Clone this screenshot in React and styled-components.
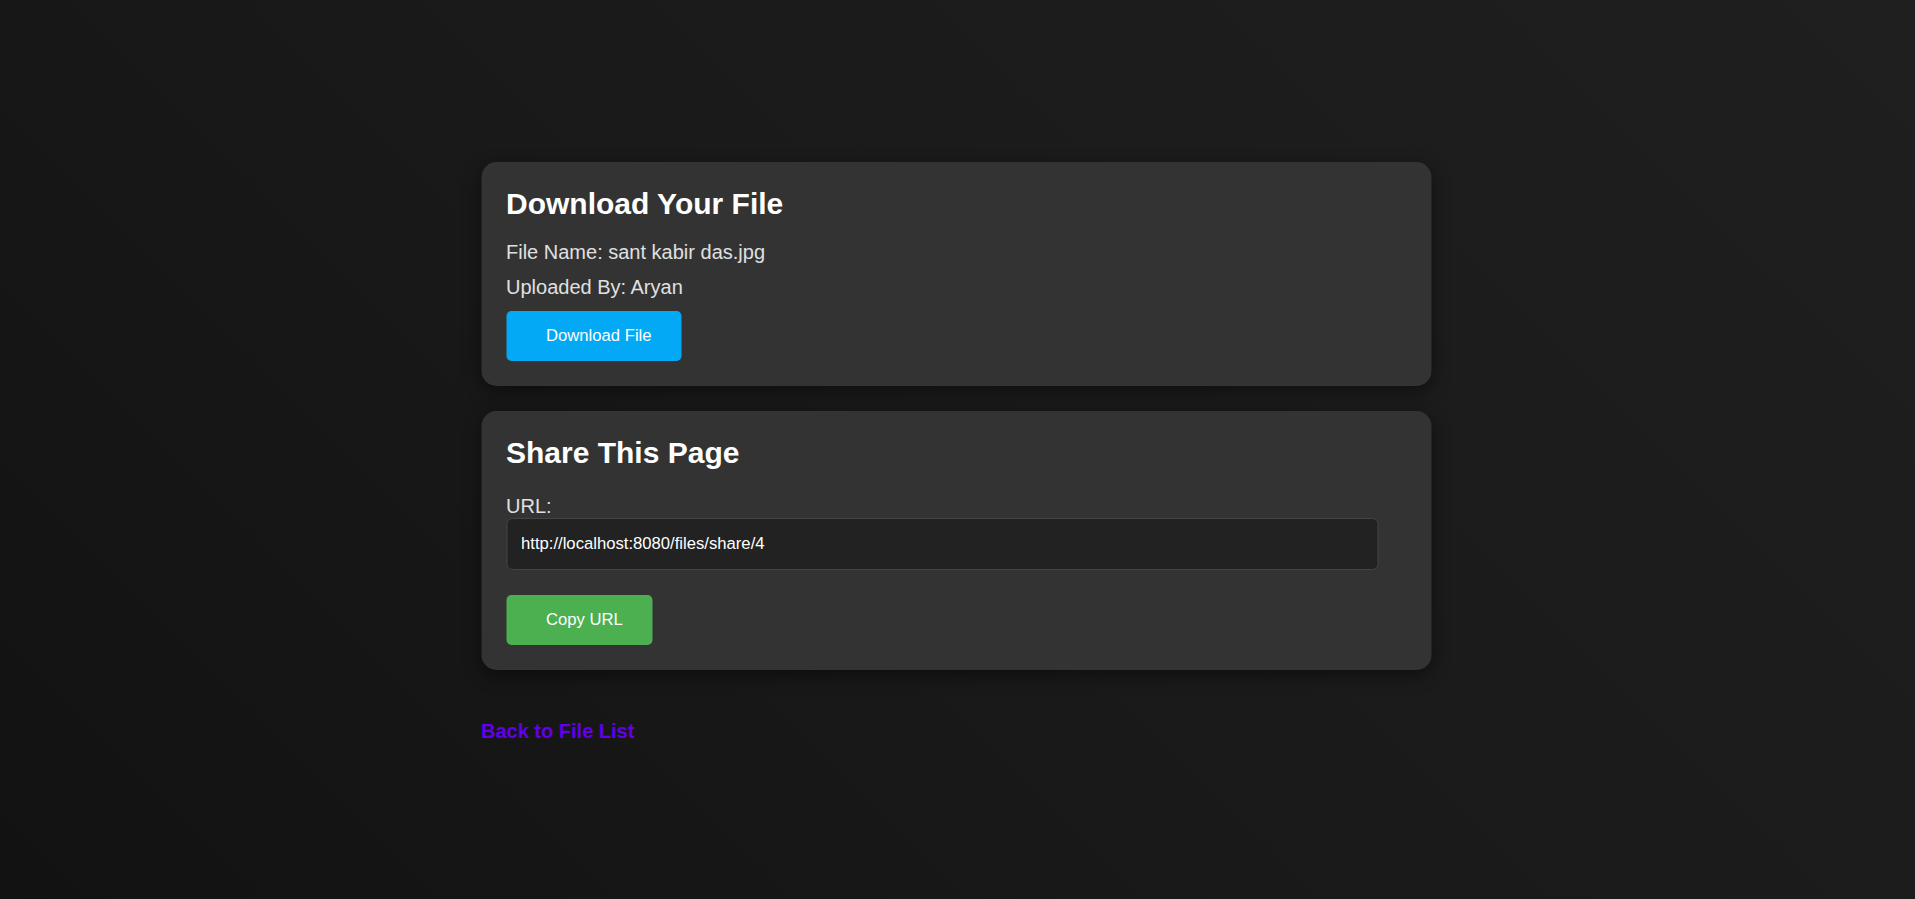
import React from 'react';
import styled, { createGlobalStyle } from 'styled-components';

const GlobalStyle = createGlobalStyle`
    html, body {
        margin: 0;
        padding: 0;
    }

    body {
        min-height: 899px;
        background: linear-gradient(45deg, #121212 0%, #1a1a1a 50%, #1f1f1f 100%);
        font-family: "Liberation Sans", Arial, sans-serif;
        color: #e0e0e0;
    }
`;

const Page = styled.div`
    width: 950px;
    margin: 0 auto;
    padding-top: 162px;
    padding-bottom: 40px;
    transform: translateX(-1.5px);
`;

const Card = styled.section`
    background: #333333;
    border-radius: 15px;
    padding: 25px;
    margin-bottom: 25px;
    box-shadow: 0 5px 18px rgba(0, 0, 0, 0.45);
`;

const Title = styled.h2`
    margin: 0 0 ${({ $gap }) => $gap || 20}px;
    font-size: 30px;
    font-weight: 700;
    color: #ffffff;
`;

const Info = styled.p`
    margin: 0 0 12px;
    font-size: 20px;
    color: #e0e0e0;
`;

const Label = styled.label`
    display: block;
    font-size: 20px;
    color: #e0e0e0;
`;

const UrlInput = styled.input`
    display: block;
    box-sizing: border-box;
    width: 872px;
    height: 52px;
    padding: 0 14px;
    background: #222222;
    border: 1px solid #444444;
    border-radius: 6px;
    color: #ffffff;
    font-family: "Liberation Sans", Arial, sans-serif;
    font-size: 16.67px;
    outline: none;
    margin-bottom: 25px;
`;

const Button = styled.button`
    display: block;
    height: 50px;
    padding: 0 30px 0 40px;
    border: none;
    border-radius: 5px;
    background: ${({ $color }) => $color};
    color: #ffffff;
    font-family: "Liberation Sans", Arial, sans-serif;
    font-size: 16.67px;
    text-align: left;
    cursor: pointer;
`;

const BackLink = styled.a`
    display: inline-block;
    margin-top: 25px;
    font-size: 20px;
    font-weight: 700;
    color: #6200ea;
    text-decoration: none;
`;

function App() {
    return (
        <>
            <GlobalStyle />
            <Page>
                <Card>
                    <Title>Download Your File</Title>
                    <Info>File Name: sant kabir das.jpg</Info>
                    <Info>Uploaded By: Aryan</Info>
                    <Button $color="#03a9f4">Download File</Button>
                </Card>

                <Card>
                    <Title $gap={25}>Share This Page</Title>
                    <Label htmlFor="share-url">URL:</Label>
                    <UrlInput
                        id="share-url"
                        type="text"
                        readOnly
                        value="http://localhost:8080/files/share/4"
                    />
                    <Button $color="#4caf50">Copy URL</Button>
                </Card>

                <BackLink href="#">Back to File List</BackLink>
            </Page>
        </>
    );
}

export default App;
